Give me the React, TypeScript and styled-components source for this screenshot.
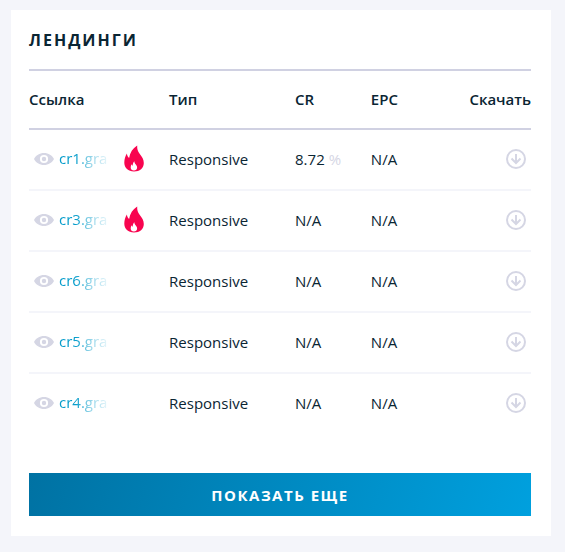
import React from "react";
import styled, { createGlobalStyle } from "styled-components";

const GlobalStyle = createGlobalStyle`
  * { box-sizing: border-box; }
  body {
    margin: 0;
    background: #f4f5fa;
    color: #0a2533;
    font-family: "Open Sans", "Noto Sans", sans-serif;
    font-size: 15px;
    line-height: 20px;
  }
`;

const Page = styled.main`
  padding: 10px 14px 16px 11px;
`;

const Card = styled.section`
  background: #fff;
  padding: 0 20px 20px 18px;
`;

const Title = styled.h2`
  margin: 0;
  padding: 20px 0 19px;
  border-bottom: 2px solid #d0d1e2;
  font-size: 16px;
  line-height: 20px;
  font-weight: 700;
  letter-spacing: 2px;
  text-transform: uppercase;
`;

const Table = styled.table`
  width: 100%;
  table-layout: fixed;
  border-collapse: separate;
  border-spacing: 0;
`;

const HeadCell = styled.th<{ $width?: string; $end?: boolean }>`
  width: ${(p) => p.$width ?? "auto"};
  height: 59px;
  padding: 0 0 2px;
  border-bottom: 2px solid #d0d1e2;
  font-weight: 600;
  text-align: ${(p) => (p.$end ? "right" : "left")};
`;

const Row = styled.tr`
  &:last-child td {
    border-bottom-color: transparent;
  }
`;

const Cell = styled.td<{ $end?: boolean }>`
  height: 61px;
  padding: 0 0 2px;
  border-bottom: 2px solid #f4f5fa;
  text-align: ${(p) => (p.$end ? "right" : "left")};
`;

const LinkCell = styled.div`
  display: flex;
  align-items: center;
  padding-left: 5px;
`;

const LandingLink = styled.a`
  display: flex;
  align-items: center;
  gap: 5px;
  color: #079dcb;
  text-decoration: none;
`;

const LinkText = styled.span`
  min-width: 48px;
  padding-bottom: 2px;
  white-space: nowrap;
  mask-image: linear-gradient(
    to right,
    #000 35%,
    rgba(0, 0, 0, 0.5) 60%,
    rgba(0, 0, 0, 0.1) 100%
  );
`;

const EyeIcon = styled.svg`
  width: 20px;
  height: 14px;
  fill: #d5d6e4;
`;

const FireIcon = styled.svg`
  width: 20px;
  height: 27px;
  margin-left: 17px;
  fill: #f8044f;
`;

const Percent = styled.span`
  color: #d5d6e4;
`;

const DownloadButton = styled.button`
  display: inline-flex;
  margin-right: 5px;
  padding: 0;
  border: 0;
  background: none;
  color: #d5d6e4;
  vertical-align: middle;
  cursor: pointer;
`;

const MoreButton = styled.button`
  display: block;
  width: 100%;
  margin-top: 38px;
  padding: 12px 20px 11px;
  border: 0;
  background: linear-gradient(105deg, #0072a3, #00a0de);
  color: #fff;
  font: 700 15px/20px "Open Sans", "Noto Sans", sans-serif;
  letter-spacing: 0.1em;
  text-transform: uppercase;
  cursor: pointer;
`;

interface Landing {
  link: string;
  hot?: boolean;
  cr?: string;
}

const landings: Landing[] = [
  { link: "cr1.gra", hot: true, cr: "8.72" },
  { link: "cr3.gra", hot: true },
  { link: "cr6.gra" },
  { link: "cr5.gra" },
  { link: "cr4.gra" },
];

const Eye = () => (
  <EyeIcon viewBox="0 0 20 14" aria-hidden="true">
    <path
      fillRule="evenodd"
      d="M10 1C5.5 1 1.8 3.4 0 7c1.8 3.6 5.5 6 10 6s8.2-2.4 10-6c-1.8-3.6-5.5-6-10-6Zm0 1.900a4.100 4.100 0 1 1 0 8.200 4.100 4.100 0 0 1 0-8.200Zm0 1.900a2.200 2.200 0 1 0 0 4.400 2.200 2.200 0 0 0 0-4.400Z"
    />
  </EyeIcon>
);

const Fire = () => (
  <FireIcon viewBox="0 0 20 27" role="img" aria-label="Hot">
    <path d="M13.2.5C13 4 13.700 6.200 15.800 9c2.400 3.200 4 5.400 4 9 0 5-4 8.500-9.800 8.500S.3 23 .3 17.800c0-3.800 1-6.500 2.600-9.300.2 1.800.8 3.200 2.200 4.400C6 7.800 8.600 3.300 13.200.5Z" />
    <path
      fill="#fff"
      d="M10.400 16.200c0 1.500.5 2.300 1.400 3.400.8 1 1.300 1.700 1.300 2.900 0 1.900-1.300 3-3.200 3s-3.200-1.200-3.200-3c0-1.300.3-2.300.9-3.300.2.7.5 1.200 1 1.500.1-1.900.7-3.500 1.800-4.500Z"
    />
  </FireIcon>
);

const Download = () => (
  <svg width="20" height="20" viewBox="0 0 20 20" fill="none" stroke="currentColor" strokeWidth="2" aria-hidden="true">
    <circle cx="10" cy="10" r="9" />
    <path d="M10 5v9M5.500 9.500 10 14l4.500-4.500" />
  </svg>
);

export default function App() {
  return (
    <>
      <GlobalStyle />
      <Page>
        <Card>
          <Title>Лендинги</Title>
          <Table>
            <thead>
              <tr>
                <HeadCell scope="col" $width="27.9%">Ссылка</HeadCell>
                <HeadCell scope="col" $width="25.1%">Тип</HeadCell>
                <HeadCell scope="col" $width="15.1%">CR</HeadCell>
                <HeadCell scope="col">EPC</HeadCell>
                <HeadCell scope="col" $end>Скачать</HeadCell>
              </tr>
            </thead>
            <tbody>
              {landings.map(({ link, hot, cr }) => (
                <Row key={link}>
                  <Cell>
                    <LinkCell>
                      <LandingLink href="#">
                        <Eye />
                        <LinkText>{link}</LinkText>
                      </LandingLink>
                      {hot && <Fire />}
                    </LinkCell>
                  </Cell>
                  <Cell>Responsive</Cell>
                  <Cell>{cr ? <>{cr} <Percent>%</Percent></> : "N/A"}</Cell>
                  <Cell>N/A</Cell>
                  <Cell $end>
                    <DownloadButton type="button" aria-label="Скачать">
                      <Download />
                    </DownloadButton>
                  </Cell>
                </Row>
              ))}
            </tbody>
          </Table>
          <MoreButton type="button">Показать еще</MoreButton>
        </Card>
      </Page>
    </>
  );
}
